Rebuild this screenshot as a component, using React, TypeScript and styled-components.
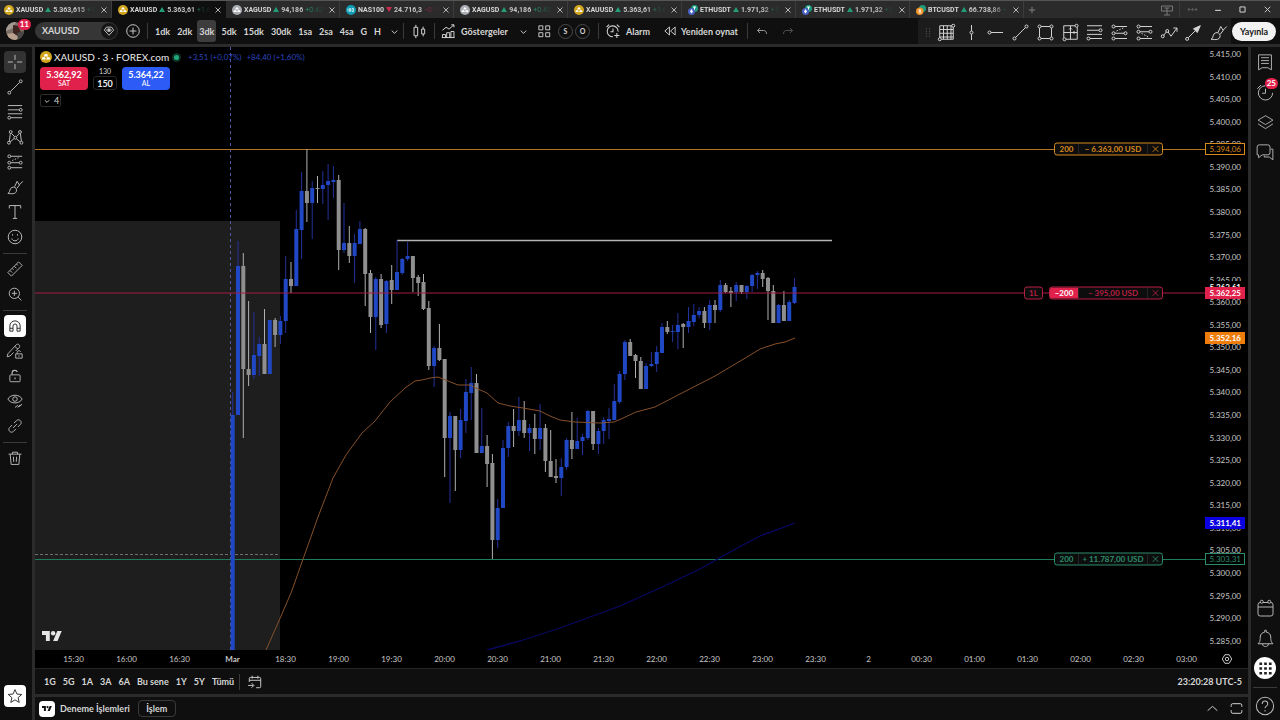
import React from "react";
import styled, { createGlobalStyle, css } from "styled-components";

const GlobalStyle = createGlobalStyle`
  * { box-sizing: border-box; }
  html, body { margin: 0; background: #2b2b2b; }
  body, button, input {
    font-family: "Lato", "Open Sans", "Liberation Sans", sans-serif;
    font-size: 9px;
    color: #d6d6d6;
  }
  button { border: 0; padding: 0; background: none; cursor: pointer; }
`;

/* ---------- page frame ---------- */

const Page = styled.div`
  display: flex;
  flex-direction: column;
  min-height: 100vh;
  background: #2b2b2b;
  overflow: hidden;
`;

const Workspace = styled.div`
  flex: 1;
  display: flex;
  gap: 3px;
  margin-top: 3px;
`;

const Center = styled.main`
  flex: 1;
  min-width: 0;
  display: flex;
  flex-direction: column;
  gap: 3px;
`;

/* ---------- browser tabs ---------- */

const TabStrip = styled.header`
  display: flex;
  height: 18px;
  background: #2b2b2b;
  border-top: 1px solid #565656;
`;

const Tab = styled.div<{ $active?: boolean; $first?: boolean }>`
  display: flex;
  align-items: center;
  gap: 2px;
  width: ${(p) => (p.$first ? 112 : 114)}px;
  padding: 0 2px 0 ${(p) => (p.$first ? 4 : 6)}px;
  background: ${(p) => (p.$active ? "#0f0f0f" : "transparent")};
  border-right: 1px solid ${(p) => (p.$active ? "#0f0f0f" : "#3c3c3c")};
`;

const TabText = styled.div`
  flex: 1;
  min-width: 0;
  display: flex;
  align-items: center;
  gap: 2px;
  white-space: nowrap;
  font-family: "Roboto", "Liberation Sans", sans-serif;
  font-size: 7px;
  font-weight: 700;
  line-height: 12px;
  mask-image: linear-gradient(90deg, #000 76%, transparent 100%);
`;

const TabPrice = styled.span`
  color: #c4c4c4;
`;

const Delta = styled.span<{ $down?: boolean }>`
  color: ${(p) => (p.$down ? "#c92a50" : "#249c78")};
  font-weight: 400;
`;

const CloseTab = styled.button`
  display: flex;
  align-items: center;
  justify-content: center;
  flex: none;
  width: 10px;
  height: 12px;
`;

const NewTab = styled.button`
  display: flex;
  align-items: center;
  justify-content: center;
  width: 16px;
  color: #8a8a8a;
`;

const WindowControls = styled.div`
  display: flex;
  align-items: center;
  margin-left: auto;
`;

const WindowButton = styled.button`
  display: flex;
  align-items: center;
  justify-content: center;
  width: 25px;
  height: 16px;
`;

/* ---------- top toolbar ---------- */

const Toolbar = styled.nav`
  display: flex;
  align-items: center;
  height: 26px;
  background: #0f0f0f;
  padding-left: 6px;
`;

const Avatar = styled.button`
  position: relative;
  display: flex;
  width: 18px;
  height: 18px;
  margin-right: 11px;
`;

const Badge = styled.span<{ $right: number }>`
  position: absolute;
  top: -3px;
  right: ${(p) => -p.$right}px;
  min-width: 13px;
  height: 11px;
  padding: 0 2px;
  border-radius: 6px;
  background: #e0214c;
  color: #fff;
  font-size: 8px;
  line-height: 11px;
  font-weight: 700;
  text-align: center;
`;

const SymbolBox = styled.label`
  display: flex;
  align-items: center;
  width: 83px;
  height: 18px;
  border-radius: 9px;
  background: #363636;
  padding: 0 1px 0 7px;
`;

const SymbolInput = styled.input`
  flex: 1;
  min-width: 0;
  padding: 0;
  border: 0;
  outline: 0;
  background: transparent;
  font-weight: 700;
  line-height: 12px;
`;

const GemButton = styled.button`
  display: flex;
  align-items: center;
  justify-content: center;
  width: 16px;
  height: 16px;
  border-radius: 8px;
  background: #161616;
`;

const Divider = styled.span<{ $before?: number }>`
  width: 1px;
  height: 16px;
  margin-left: ${(p) => p.$before ?? 0}px;
  background: #3a3a3a;
`;

const IconButton = styled.button<{ $w?: number }>`
  display: flex;
  align-items: center;
  justify-content: center;
  flex: none;
  width: ${(p) => p.$w ?? 24}px;
  height: 22px;
`;

const Intervals = styled.div`
  display: flex;
  gap: 3px;
  padding: 0 2px 0 5px;
`;

const Interval = styled.button<{ $active?: boolean }>`
  height: 22px;
  padding: 0 2px;
  border-radius: 3px;
  font-weight: 700;
  background: ${(p) => (p.$active ? "#3d3d3d" : "transparent")};
`;

const TextButton = styled.button<{ $w: number }>`
  display: flex;
  align-items: center;
  width: ${(p) => p.$w}px;
  height: 22px;
  white-space: nowrap;
  font-weight: 700;
`;

const Round = styled.button`
  width: 15px;
  height: 15px;
  margin-left: 2px;
  border: 1px solid #4a4a4a;
  border-radius: 8px;
  font-size: 7px;
  line-height: 12px;
  font-weight: 700;
`;

const Favorites = styled.div`
  display: flex;
  align-items: center;
  width: 313px;
  height: 26px;
  margin-left: auto;
  padding: 2px 0 0 3px;
  background: #1c1c1c;
  border-radius: 4px 0 0 0;
`;

const FavoriteTool = styled.button`
  display: flex;
  align-items: center;
  justify-content: center;
  flex: 1 1 0;
  height: 22px;
`;

const Publish = styled.button`
  width: 44px;
  height: 19px;
  margin: 0 4px 0 1px;
  border-radius: 10px;
  background: #f2f2f2;
  color: #1a1a1a;
  font-weight: 700;
`;

/* ---------- side bars ---------- */

const SideBar = styled.aside<{ $w: number; $right?: boolean }>`
  flex: none;
  display: flex;
  flex-direction: column;
  align-items: center;
  gap: ${(p) => (p.$right ? 8 : 3)}px;
  width: ${(p) => p.$w}px;
  padding: ${(p) => (p.$right ? "4px 1px 3px 0" : "4px 2px 13px 0")};
  background: #0f0f0f;
`;

const SideFoot = styled.div`
  display: flex;
  flex-direction: column;
  align-items: center;
  gap: 6px;
`;

const Tool = styled.button<{ $active?: boolean; $white?: boolean; $round?: boolean }>`
  position: relative;
  display: flex;
  align-items: center;
  justify-content: center;
  flex: none;
  width: 22px;
  height: 22px;
  border-radius: ${(p) => (p.$round ? 11 : 4)}px;
  color: #b8b8b8;
  ${(p) => p.$active && css`background: #333;`}
  ${(p) => p.$white && css`background: #fff; color: #222;`}
`;

const Rule = styled.span`
  width: 24px;
  height: 1px;
  margin: 2px 0 1px;
  background: #3a3a3a;
`;

const Spacer = styled.span`
  flex: 1;
`;

/* ---------- chart ---------- */

const ChartPanel = styled.section`
  flex: 1;
  display: flex;
  flex-direction: column;
  background: #000;
  overflow: hidden;
`;

const PlotRow = styled.div`
  flex: 1;
  display: flex;
  min-height: 603px;
`;

const Plot = styled.div`
  position: relative;
  flex: 1;
  min-width: 0;
`;

const Canvas = styled.svg`
  position: absolute;
  inset: 0;
  width: 100%;
  height: 100%;
`;

const Legend = styled.div`
  position: absolute;
  top: 4px;
  left: 5px;
  display: flex;
  flex-direction: column;
  align-items: flex-start;
  gap: 4px;
`;

const LegendTitle = styled.div`
  display: flex;
  align-items: center;
  gap: 2px;
  height: 12px;
  white-space: nowrap;
`;

const LegendName = styled.h1`
  margin: 0;
  width: 112px;
  font-size: 10px;
  line-height: 12px;
  font-weight: 400;
  color: #ececec;
`;

const StatusDot = styled.span`
  width: 5px;
  height: 5px;
  margin: 0 7px 0 6px;
  border-radius: 3px;
  background: #22a97c;
  box-shadow: 0 0 0 2px #0b3327;
`;

const Change = styled.span`
  margin-right: 3px;
  color: #2c44bc;
  font-size: 8px;
  line-height: 12px;
`;

const TradeRow = styled.div`
  display: flex;
  gap: 5px;
`;

const TradeButton = styled.button<{ $buy?: boolean }>`
  display: flex;
  flex-direction: column;
  align-items: center;
  justify-content: center;
  width: 48px;
  height: 23px;
  border-radius: 4px;
  background: ${(p) => (p.$buy ? "#2d5bf5" : "#e0214c")};
  color: #fff;
  font-size: 7px;
  line-height: 8px;
  b { font-size: 9px; line-height: 9px; }
`;

const Quantity = styled.label`
  display: flex;
  flex-direction: column;
  align-items: center;
  gap: 1px;
  font-size: 7px;
  line-height: 8px;
`;

const QuantityInput = styled.input`
  width: 24px;
  height: 14px;
  padding: 0;
  border: 1px solid #262626;
  border-radius: 3px;
  background: #000;
  color: #eee;
  font-weight: 700;
  text-align: center;
`;

const Collapse = styled.button`
  display: flex;
  align-items: center;
  justify-content: center;
  gap: 2px;
  width: 21px;
  height: 13px;
  border: 1px solid #2c2c2c;
  border-radius: 2px;
`;

const Watermark = styled.div`
  position: absolute;
  left: 7px;
  bottom: 9px;
  display: flex;
`;

const Order = styled.div<{ $color: string }>`
  position: absolute;
  right: 42px;
  display: flex;
  gap: 6px;
  height: 13px;
  transform: translateY(-50%);
  color: ${(p) => p.$color};
  line-height: 11px;
`;

const OrderBox = styled.div`
  display: flex;
  align-items: center;
  overflow: hidden;
  border: 1px solid currentColor;
  border-radius: 3px;
  background: #0d0d0d;
  font-size: 8px;
  font-weight: 700;
`;

const OrderSize = styled.span<{ $fill?: string }>`
  width: ${(p) => (p.$fill ? 28 : 23)}px;
  text-align: center;
  background: ${(p) => p.$fill ?? "transparent"};
  color: ${(p) => (p.$fill ? "#fff" : "inherit")};
`;

const OrderAmount = styled.span`
  width: 70px;
  border: solid #252525;
  border-width: 0 1px;
  text-align: center;
  white-space: nowrap;
`;

const OrderClose = styled.button`
  display: flex;
  align-items: center;
  justify-content: center;
  width: 14px;
  color: inherit;
`;

const OrderKind = styled.span`
  width: 17px;
  text-align: center;
`;

const PriceScale = styled.div`
  position: relative;
  flex: none;
  display: flex;
  flex-direction: column;
  justify-content: space-between;
  width: 43px;
  padding: 0 7px 2px 0;
  color: #c8c8c8;
  font-size: 8px;
  line-height: 14px;
  text-align: right;
`;

const PriceTag = styled.span<{ $bg: string; $color?: string }>`
  position: absolute;
  left: 0;
  width: 40px;
  height: 12px;
  padding-right: 3px;
  transform: translateY(-50%);
  background: ${(p) => p.$bg};
  border: 1px solid ${(p) => p.$color ?? p.$bg};
  color: ${(p) => p.$color ?? "#fff"};
  font-weight: ${(p) => (p.$color ? 400 : 700)};
  line-height: 10px;
`;

const TimeScale = styled.div`
  display: flex;
  align-items: center;
  height: 18px;
  padding-left: 12px;
  font-size: 8px;
  color: #c8c8c8;
`;

const TimeLabel = styled.span<{ $bold?: boolean }>`
  flex: 1;
  text-align: center;
  font-weight: ${(p) => (p.$bold ? 700 : 400)};
`;

const ScaleSettings = styled.button`
  display: flex;
  width: 35px;
  padding-left: 8px;
`;

const RangeBar = styled.div`
  display: flex;
  align-items: center;
  height: 26px;
  padding: 0 6px;
  border-top: 1px solid #242424;
  background: #0f0f0f;
`;

const Ranges = styled.div`
  display: flex;
  gap: 1px;
`;

const RangeButton = styled.button`
  height: 18px;
  padding: 0 3px;
  font-weight: 700;
  white-space: nowrap;
`;

const Clock = styled.button`
  margin-left: auto;
  font-weight: 700;
`;

const BottomPanel = styled.footer`
  display: flex;
  align-items: center;
  height: 23px;
  padding: 0 0 0 4px;
  background: #0f0f0f;
  font-weight: 700;
`;

const LogoTile = styled.span`
  display: flex;
  align-items: center;
  justify-content: center;
  width: 16px;
  height: 16px;
  margin-right: 5px;
  border-radius: 4px;
  background: #fff;
`;

const TradeTab = styled.button`
  width: 38px;
  height: 17px;
  margin-left: 8px;
  border: 1px solid #3a3a3a;
  border-radius: 4px;
  font-weight: 700;
`;

/* ---------- icons ---------- */

const Dot = ({ x, y }: { x: number; y: number }) => <circle cx={x} cy={y} r="2" />;

const shapes: Record<string, React.ReactNode> = {
  cross: <path d="M14 4v7M14 17v7M4 14h7M17 14h7" />,
  line: <><path d="M7.6 20.4 20.4 7.6" /><Dot x={6} y={22} /><Dot x={22} y={6} /></>,
  fib: <><path d="M4 5h20M4 11h16M4 16.5h20M8 22h16" /><Dot x={22} y={11} /><Dot x={6} y={22} /></>,
  pattern: <><path d="M6 20 7.500 9M9 9l4.500 4.500M16 13.500 20 9M7 21l6-5M16 16.500l5.500 4.500M21.500 9 23 20" /><Dot x={8} y={7} /><Dot x={14.5} y={15} /><Dot x={21} y={7} /><Dot x={5.5} y={22} /><Dot x={23} y={22} /></>,
  position: <><path d="M8 6h16M8 15h12M8 22h16" /><path d="m10 12 9-4" strokeDasharray="2 2" /><Dot x={6} y={6} /><Dot x={6} y={15} /><Dot x={22} y={15} /><Dot x={6} y={22} /></>,
  short: <><path d="M8 6h16M8 13h12M8 22h16" /><path d="m10 15 9 5" strokeDasharray="2 2" /><Dot x={6} y={6} /><Dot x={6} y={13} /><Dot x={22} y={13} /><Dot x={6} y={22} /></>,
  brush: <path d="M4 23c3-1 2-4 4-7 2-2.5 6-2.5 7.500 0s.5 6-2.500 7c-3 .8-6 .3-9 0zM13.500 13.500 17 6l3 5 5-5M16.500 16l4-5" />,
  text: <path d="M6 9V5h16v4M14 5v18M11 23h6" />,
  smile: <><circle cx="14" cy="14" r="9.5" /><path d="M9.5 16c1 4.5 8 4.5 9 0M10.5 10v2M17.5 10v2" /></>,
  ruler: <path d="M4 19 19 4l5 5L9 24zM7 16l3 3M10 13l2 2M13 10l3 3M16 7l2 2" />,
  zoom: <><circle cx="13" cy="13" r="8" /><path d="m19 19 5 5M13 9v8M9 13h8" /></>,
  magnet: <path d="M5 23v-9a9 9 0 0 1 18 0v9h-5.5v-9a3.5 3.5 0 0 0-7 0v9zM5 18h5.5M17.5 18H23" />,
  pencilLock: <><path d="M4 18 16 5c2-2 6 1 4 4l-5 5M4 18l-1 4 4-1 5-5M14 8l4 3" /><path d="M15 18h9v6h-9zM17 18v-2c0-3 4.5-3 5-1" /><path d="M19.5 20v2" /></>,
  lock: <><rect x="5" y="12" width="18" height="12" rx="1.5" /><path d="M9 12V8c0-5 8-5 9-1M14 16.5v3" strokeWidth="2" /></>,
  eye: <><path d="M3 11c4-8 18-8 22 0-4 8-18 8-22 0z" /><circle cx="14" cy="11" r="3.5" /><path d="m14 24 4-3 2 2 5-4M18 24l4-4" /></>,
  link: <path d="m11 17 6-6M12.5 9.5l4-4c4-3.500 9.500 2 6 6l-4 4M9.500 12.500l-4 4c-3.500 4 2 9.500 6 6l4-4" />,
  trash: <path d="M4 8h20M10 8V5h8v3M6.5 8 8 24h12l1.500-16M11.500 12l.5 8M16.500 12l-.5 8" />,
  star: <path d="m14 4 3 7 7.500.6-5.700 5 1.800 7.400-6.600-4-6.600 4 1.800-7.400-5.700-5L11 11z" />,
  grid: <><path d="M5 5h16M5 10h18M5 15h18M5 20h18M5 5v16M10 5v18M15 5v18M20 5v18M23 7v16H7" /><Dot x={23} y={5} /><Dot x={5} y={23} /></>,
  vline: <><path d="M14 4v8M14 16v8" /><Dot x={14} y={14} /></>,
  hline: <><path d="M8 14h16" /><Dot x={6} y={14} /></>,
  rect: <><path d="M8 6h12M8 22h12M6 8v12M22 8v12" /><Dot x={6} y={6} /><Dot x={22} y={6} /><Dot x={6} y={22} /><Dot x={22} y={22} /></>,
  range: <><path d="M5 5h15M5 5v16M23 7v16H8M14 5v18M5 14h18M12 10l2-2 2 2M18 12l2 2-2 2" /><Dot x={22} y={5} /><Dot x={6} y={23} /></>,
  zigzag: <><path d="m6 18 4-5M12 13l4 6M16 19l8-11M19 8h5v5" /><Dot x={5} y={19} /><Dot x={11} y={12} /></>,
  arrow: <><path d="M7 21 17 11M21 7l2-2" /><path d="m14 9 9-4-4 9z" fill="currentColor" /><Dot x={5.5} y={22.5} /></>,
  candles: <path d="M8 3v4M8 21v4M5 7h6v14H5zM20 6v4M20 18v4M17.500 10h5v8h-5z" />,
  indicators: <path d="M4 24v-5h5v5M11 24v-8h5v8M18 24V14h5v10M3 24h21M4 12l6-5 5 3 8-7M18.500 3H23v4" />,
  layouts: <path d="M5 5h7v7H5zM17 5h7v7h-7zM5 17h7v7H5zM17 17h7v7h-7z" />,
  alarm: <path d="M22 15a8.5 8.5 0 1 0-8 8M14 10v5h-4M4 8l4-4M20 4l4 4M20 17v8M16 21h8" />,
  replay: <path d="M13 7v14L5 14zM23 7v14l-8-7z" />,
  undo: <path d="m10 8-5 5 5 5M5 13h12c4 0 6 2.5 6 7" />,
  redo: <path d="m18 8 5 5-5 5M23 13H11c-4 0-6 2.5-6 7" />,
  chevron: <path d="m8 12 6 6 6-6" />,
  chevronUp: <path d="m5 18 9-8 9 8" />,
  close: <path d="m7 7 14 14M21 7 7 21" />,
  plus: <path d="M14 5v18M5 14h18" />,
  plusCircle: <><circle cx="14" cy="14" r="11" /><path d="M14 8v12M8 14h12" /></>,
  minimize: <path d="M6 15h16" strokeWidth="3" />,
  maximize: <path d="M6 6h16v16H6z" strokeWidth="3" />,
  screen: <path d="M3 6h22v10H3zM14 10v14M8 24h12M9 10h10" />,
  dots: <><Dot x={5} y={14} /><Dot x={14} y={14} /><Dot x={23} y={14} /></>,
  gem: <><path d="M8 5h12l5 7-11 12L3 12z" /><path d="M8 12c3-4 9-4 12 0-3 4-9 4-12 0z" /><circle cx="14" cy="12" r="2" fill="currentColor" /></>,
  watchlist: <path d="M5 4h18v21l-5-3h-8l-5 3zM8.5 8h11M8.5 12h11M8.5 16h11" />,
  clock: <path d="M14 5a9.5 9.5 0 1 0 9.5 9.5M14 9v6H9.5M3 9l5-5" />,
  layers: <path d="m14 4 11 6.5L14 17 3 10.500zM3 16l11 7 11-7" />,
  chat: <path d="M6 4h12a3 3 0 0 1 3 3v8a3 3 0 0 1-3 3h-8l-5 4V18H3V7a3 3 0 0 1 3-3zM22 10h3v15l-5-4h-7v-2" />,
  calendar: <><rect x="4" y="6" width="20" height="18" rx="3" /><path d="M4 12h20M11 6h6" /><circle cx="9" cy="5" r="2" fill="#0f0f0f" /><circle cx="19" cy="5" r="2" fill="#0f0f0f" /></>,
  bell: <path d="M4 21c2-2 3-3 3-9 0-4 3-6 6-6.500V3h2v2.500c3 .5 6 2.500 6 6.500 0 6 1 7 3 9zM10 21c0 5 8 5 8 0" />,
  apps: <path fill="currentColor" stroke="none" d="M5 5h4v4H5zM12 5h4v4h-4zM19 5h4v4h-4zM5 12h4v4H5zM12 12h4v4h-4zM19 12h4v4h-4zM5 19h4v4H5zM12 19h4v4h-4zM19 19h4v4h-4z" />,
  help: <><circle cx="14" cy="14" r="11" /><path d="M10.5 11.500c0-5 7-5 7 0 0 3-3.500 2.500-3.500 5.500M14 19v2" /></>,
  gear: <><path d="M9 4h10l6 10-6 10H9L3 14z" /><circle cx="14" cy="14" r="4" /></>,
  goTo: <path d="M4 14V8a2 2 0 0 1 2-2h16a2 2 0 0 1 2 2v14a2 2 0 0 1-2 2h-6M4 11h20M9 3v5M19 3v5M2 20h9M8 16l4 4-4 4" />,
  expand: <path d="M4 11V8a3 3 0 0 1 3-3h14a3 3 0 0 1 3 3v3M24 17v3a3 3 0 0 1-3 3H7a3 3 0 0 1-3-3v-3" />,
  grip: <path fill="currentColor" stroke="none" d="M8 3h3v3H8zM17 3h3v3h-3zM8 10h3v3H8zM17 10h3v3h-3zM8 17h3v3H8zM17 17h3v3h-3zM8 24h3v3H8zM17 24h3v3h-3z" />,
};

interface IconProps { name: string; size?: number; weight?: number; color?: string }

function Icon({ name, size = 21, weight = 1.3, color = "currentColor" }: IconProps) {
  return (
    <svg width={size} height={size} viewBox="0 0 28 28" fill="none" stroke={color} color={color} strokeWidth={weight} strokeLinejoin="round" aria-hidden="true">
      {shapes[name]}
    </svg>
  );
}

function Logo({ width, color }: { width: number; color: string }) {
  return (
    <svg width={width} height={Math.round(width / 2)} viewBox="0 4 36 18" fill={color} aria-hidden="true">
      <path d="M14 22H7V11H0V4h14v18zM28 22h-8l7.500-18h8L28 22z" />
      <circle cx="20" cy="8" r="4" />
    </svg>
  );
}

const CoinSvg = styled.svg`
  flex: none;
`;

function Coin({ kind, size = 10 }: { kind: string; size?: number }) {
  return (
    <CoinSvg width={size} height={size} viewBox="0 0 20 20" aria-hidden="true">
      {(kind === "gold" || kind === "silver") && (
        <>
          <circle cx="10" cy="10" r="10" fill={kind === "gold" ? "#d1a51c" : "#a9adb3"} />
          <path fill="#fff" d="M8 5h4l1.500 4h-7zM4 10.500h4.500L9.500 14H3zM11.500 10.500H16l1 3.500h-6.500z" />
        </>
      )}
      {kind === "index" && (
        <>
          <circle cx="10" cy="10" r="10" fill="#0e9db5" />
          <path d="M4 7v6M7 7v6h2V7zM12 7v6h3V7z" stroke="#fff" strokeWidth="1.3" fill="none" />
        </>
      )}
      {kind === "eth" && (
        <>
          <circle cx="13" cy="7" r="7" fill="#1c9c7c" />
          <path d="M10 4h6M13 4v6" stroke="#fff" strokeWidth="2" />
          <circle cx="7" cy="13" r="7" fill="#4a62c4" />
          <path d="m7 8 3 5-3 4-3-4z" fill="#fff" />
        </>
      )}
      {kind === "btc" && (
        <>
          <circle cx="13" cy="7" r="7" fill="#1c9c7c" />
          <circle cx="7.5" cy="12.5" r="7.5" fill="#ee9226" />
          <path d="M6 9h3v3H6zM6 12h4v4H6z" stroke="#fff" strokeWidth="1.2" fill="none" />
        </>
      )}
    </CoinSvg>
  );
}

/* ---------- data ---------- */

const tabs = [
  ["gold", "XAUUSD", "5.363,615", "+1.6%"],
  ["gold", "XAUUSD", "5.363,61", "+1.6%"],
  ["silver", "XAGUSD", "94,186", "+0.42%"],
  ["index", "NAS100", "24.716,3", "−0.78%"],
  ["silver", "XAGUSD", "94,186", "+0.42%"],
  ["gold", "XAUUSD", "5.363,61", "+1.6%"],
  ["eth", "ETHUSDT", "1.971,32", "+1.6%"],
  ["eth", "ETHUSDT", "1.971,32", "+1.6%"],
  ["btc", "BTCUSDT", "66.738,86", "+1.4%"],
];

const intervals = ["1dk", "2dk", "3dk", "5dk", "15dk", "30dk", "1sa", "2sa", "4sa", "G", "H"];
const favorites = ["grid", "vline", "hline", "line", "rect", "range", "fib", "position", "short", "zigzag", "arrow", "brush"];
const drawingTools = ["cross", "line", "fib", "pattern", "position", "brush", "text", "smile"];
const ranges = ["1G", "5G", "1A", "3A", "6A", "Bu sene", "1Y", "5Y", "Tümü"];
const times = ["15:30", "16:00", "16:30", "Mar", "18:30", "19:00", "19:30", "20:00", "20:30", "21:00", "21:30", "22:00", "22:30", "23:00", "23:30", "2", "00:30", "01:00", "01:30", "02:00", "02:30", "03:00"];
const prices = Array.from({ length: 27 }, (_, i) => `5.${415 - i * 5},00`);

const PLOT_W = 1170;
const PLOT_H = 603;
const ORIGIN_X = 35;
const ORIGIN_Y = 47;

const priceTop = (price: number) => `${((102 + (5394.06 - price) * 4.52) / PLOT_H) * 100}%`;

/* direction, wick top, body top, body bottom, wick bottom */
type Candle = [string, number, number, number, number];
const candles: Candle[] = [
  ["u", 392, 415, 660, 660], ["u", 241, 266, 415, 415], ["d", 253, 266, 369, 438], ["d", 301, 369, 375, 386],
  ["u", 312, 355, 375, 379], ["u", 337, 344, 356, 376], ["d", 309, 344, 374, 374], ["u", 320, 320, 374, 374],
  ["d", 318, 320, 335, 347], ["u", 316, 321, 335, 344], ["u", 256, 279, 321, 333], ["d", 262, 279, 286, 293],
  ["u", 210, 229, 286, 286], ["u", 172, 191, 230, 259], ["d", 149, 191, 203, 222], ["u", 181, 188, 203, 239],
  ["d", 176, 188, 189, 203], ["u", 171, 185, 189, 204], ["u", 164, 181, 185, 220], ["u", 166, 180, 182, 198],
  ["d", 175, 180, 250, 270], ["u", 203, 243, 250, 253], ["d", 226, 243, 256, 263], ["u", 234, 243, 256, 283],
  ["u", 221, 229, 244, 244], ["d", 228, 229, 274, 306], ["d", 270, 273, 317, 333], ["u", 277, 279, 317, 350],
  ["d", 274, 279, 325, 328], ["u", 280, 281, 324, 333], ["d", 265, 280, 290, 304], ["u", 240, 272, 290, 290],
  ["u", 258, 259, 273, 275], ["u", 242, 256, 259, 261], ["d", 256, 256, 278, 292], ["d", 275, 277, 283, 296],
  ["d", 274, 282, 309, 310], ["d", 301, 308, 366, 370], ["u", 346, 348, 366, 387], ["d", 324, 348, 360, 361],
  ["d", 359, 359, 438, 477], ["u", 412, 416, 438, 503], ["d", 416, 416, 450, 491], ["u", 409, 420, 450, 458],
  ["u", 379, 392, 421, 433], ["u", 367, 383, 393, 420], ["d", 374, 383, 453, 453], ["u", 408, 446, 453, 453],
  ["d", 435, 446, 464, 487], ["d", 454, 463, 540, 559], ["u", 499, 508, 540, 548], ["u", 440, 448, 508, 508],
  ["u", 422, 426, 448, 457], ["d", 409, 426, 431, 447], ["u", 397, 420, 431, 436], ["d", 401, 420, 433, 438],
  ["u", 424, 428, 433, 451], ["d", 414, 428, 439, 454], ["u", 404, 428, 439, 450], ["d", 424, 428, 461, 472],
  ["d", 430, 461, 477, 477], ["d", 459, 476, 478, 483], ["u", 458, 467, 478, 496], ["u", 438, 440, 467, 470],
  ["d", 412, 440, 449, 459], ["u", 418, 441, 449, 449], ["u", 434, 437, 441, 455], ["u", 410, 411, 438, 440],
  ["d", 411, 411, 444, 450], ["u", 428, 431, 444, 454], ["u", 417, 420, 431, 444], ["u", 408, 419, 421, 439],
  ["u", 384, 401, 420, 420], ["u", 371, 374, 402, 404], ["u", 340, 342, 374, 380], ["d", 339, 342, 356, 356],
  ["d", 354, 355, 361, 378], ["d", 357, 361, 389, 389], ["u", 363, 366, 389, 389], ["u", 352, 364, 366, 367],
  ["u", 346, 352, 364, 372], ["u", 323, 327, 353, 353], ["d", 321, 327, 332, 334], ["u", 325, 331, 332, 342],
  ["u", 313, 325, 332, 349], ["d", 323, 324, 327, 348], ["u", 307, 321, 327, 333], ["u", 304, 315, 322, 326],
  ["u", 307, 311, 315, 318], ["d", 307, 311, 323, 328], ["u", 300, 305, 323, 330], ["d", 300, 305, 310, 323],
  ["u", 280, 285, 310, 312], ["d", 283, 285, 292, 293], ["d", 287, 291, 293, 307], ["u", 282, 285, 292, 301],
  ["d", 285, 285, 292, 294], ["u", 285, 286, 292, 299], ["u", 274, 275, 286, 292], ["u", 271, 273, 275, 289],
  ["d", 270, 273, 279, 287], ["d", 277, 278, 291, 320], ["d", 285, 291, 323, 323], ["u", 304, 305, 323, 323],
  ["d", 291, 305, 321, 321], ["u", 300, 302, 321, 321], ["u", 278, 287, 303, 304],
];

const fastAverage = "266,650 278,623 291,593 302,562 318,517 333,478 346,455 362,433 375,421 390,402 405,388 415,381 422,380 430,378 438,377 448,381 458,385 470,385 478,389 487,393 498,403 510,406 523,408 540,411 550,416 560,420 575,422 600,423 614,422 621,419 636,412 655,407 680,394 715,376 747,357 760,349 775,344 785,342 795,338";
const slowAverage = "487,650 520,641 560,628 620,606 660,588 700,569 730,552 760,536 795,523";

function ChartCanvas() {
  return (
    <Canvas viewBox={`${ORIGIN_X} ${ORIGIN_Y} ${PLOT_W} ${PLOT_H}`} preserveAspectRatio="none" role="img" aria-label="XAUUSD">
      <rect x="35" y="221" width="245" height="429" fill="#1e1e1e" />
      <path d="M35 554.5H280" stroke="#6e6e6e" strokeDasharray="3 2" />
      <path d="M230.5 47V650" stroke="#5258a0" strokeDasharray="3 3" />
      <rect x="35" y="149" width="1170" height="1" fill="#b0762a" />
      <rect x="35" y="559" width="1170" height="1" fill="#1f7a5e" />
      <path d="M397 240.5H832" stroke="#b4b4b4" strokeWidth="1.5" />
      <polyline points={slowAverage} fill="none" stroke="#080862" strokeWidth="1.3" />
      {candles.map(([dir, high, top, bottom, low], i) => {
        const x = 232.7 + i * 5.3;
        const up = dir === "u";
        return (
          <g key={i}>
            <rect x={x - 0.5} y={high} width="1" height={low - high} fill={up ? "#23319a" : "#b0b0b0"} />
            <rect x={x - 2} y={top} width="4" height={Math.max(1, bottom - top)} fill={up ? "#2148c4" : "#8f8f8f"} />
          </g>
        );
      })}
      <polyline points={fastAverage} fill="none" stroke="#86502a" />
      <path d="M35 293H1205" stroke="#a31c40" />
    </Canvas>
  );
}

interface OrderProps { price: number; size: string; amount: string; color: string; kind?: string }

function OrderLabel({ price, size, amount, color, kind }: OrderProps) {
  return (
    <Order $color={color} style={{ top: priceTop(price) }}>
      {kind && <OrderBox><OrderKind>{kind}</OrderKind></OrderBox>}
      <OrderBox>
        <OrderSize $fill={kind ? "#e0214c" : undefined}>{size}</OrderSize>
        <OrderAmount>{amount}</OrderAmount>
        <OrderClose aria-label="Kapat"><Icon name="close" size={11} weight={2.2} /></OrderClose>
      </OrderBox>
    </Order>
  );
}

export default function App() {
  return (
    <Page>
      <GlobalStyle />
      <TabStrip>
        {tabs.map(([kind, name, price, delta], i) => {
          const down = delta.startsWith("−");
          return (
            <Tab key={i} $first={i === 0} $active={i === 1}>
              <Coin kind={kind} size={10} />
              <TabText>
                <span>{name}</span>
                <CoinSvg width="6" height="5" viewBox="0 0 6 5" aria-hidden="true">
                  <path d={down ? "M0 0h6L3 5z" : "M3 0l3 5H0z"} fill={down ? "#c92a50" : "#249c78"} />
                </CoinSvg>
                <TabPrice>{price}</TabPrice>
                <Delta $down={down}>{delta}</Delta>
              </TabText>
              <CloseTab aria-label="Sekmeyi kapat"><Icon name="close" size={10} weight={2.3} /></CloseTab>
            </Tab>
          );
        })}
        <NewTab aria-label="Yeni sekme"><Icon name="plus" size={10} weight={2.5} /></NewTab>
        <WindowControls>
          <WindowButton aria-label="Ekran"><Icon name="screen" size={14} weight={1.6} color="#8a8a8a" /></WindowButton>
          <Divider />
          <WindowButton aria-label="Diğer"><Icon name="dots" size={11} weight={1.6} color="#8a8a8a" /></WindowButton>
          <WindowButton aria-label="Küçült"><Icon name="minimize" size={10} /></WindowButton>
          <WindowButton aria-label="Büyüt"><Icon name="maximize" size={9} /></WindowButton>
          <WindowButton aria-label="Kapat"><Icon name="close" size={11} weight={2.3} /></WindowButton>
        </WindowControls>
      </TabStrip>

      <Toolbar>
        <Avatar aria-label="Profil">
          <svg width="18" height="18" viewBox="0 0 18 18" aria-hidden="true">
            <clipPath id="avatar"><circle cx="9" cy="9" r="9" /></clipPath>
            <g clipPath="url(#avatar)">
              <rect width="18" height="18" fill="#7d6e66" />
              <path d="M0 0h10l-3 6-7 3z" fill="#a39a92" />
              <path d="M7 3l5 1 3 6-3 4-5-2z" fill="#3d2520" />
              <path d="M1 12l6-1 6 4-3 3H3z" fill="#b9a08f" />
              <path d="M11 11l7-2v9h-6z" fill="#4b4744" />
            </g>
          </svg>
          <Badge $right={7}>11</Badge>
        </Avatar>
        <SymbolBox>
          <SymbolInput defaultValue="XAUUSD" aria-label="Sembol" />
          <GemButton aria-label="Özellikler"><Icon name="gem" size={12} weight={2} /></GemButton>
        </SymbolBox>
        <IconButton $w={29} aria-label="Karşılaştır"><Icon name="plusCircle" size={16} weight={1.6} /></IconButton>
        <Divider />
        <Intervals>
          {intervals.map((t) => <Interval key={t} $active={t === "3dk"}>{t}</Interval>)}
        </Intervals>
        <IconButton $w={18} aria-label="Zaman aralığı"><Icon name="chevron" size={13} weight={2} /></IconButton>
        <Divider />
        <IconButton $w={30} aria-label="Mumlar"><Icon name="candles" size={17} weight={1.6} /></IconButton>
        <Divider />
        <IconButton $w={26} aria-label="Gösterge simgesi"><Icon name="indicators" size={17} weight={1.6} /></IconButton>
        <TextButton $w={53}>Göstergeler</TextButton>
        <IconButton $w={18} aria-label="Gösterge şablonları"><Icon name="chevron" size={13} weight={2} /></IconButton>
        <IconButton $w={24} aria-label="Düzenler"><Icon name="layouts" size={16} weight={1.6} /></IconButton>
        <Round>S</Round>
        <Round>O</Round>
        <Divider $before={8} />
        <IconButton $w={27} aria-label="Alarm ekle"><Icon name="alarm" size={18} weight={1.6} /></IconButton>
        <TextButton $w={33}>Alarm</TextButton>
        <IconButton $w={22} aria-label="Geri sar"><Icon name="replay" size={16} weight={1.6} /></IconButton>
        <TextButton $w={66}>Yeniden oynat</TextButton>
        <Divider />
        <IconButton $w={28} aria-label="Geri al"><Icon name="undo" size={14} weight={1.8} color="#a8a8a8" /></IconButton>
        <IconButton $w={24} aria-label="Yinele"><Icon name="redo" size={14} weight={1.8} color="#5a5a5a" /></IconButton>
        <Favorites>
          <IconButton $w={13} aria-label="Taşı"><Icon name="grip" size={10} color="#4c4c4c" /></IconButton>
          {favorites.map((f) => (
            <FavoriteTool key={f} aria-label={f}><Icon name={f} size={21} /></FavoriteTool>
          ))}
        </Favorites>
        <Publish>Yayınla</Publish>
      </Toolbar>

      <Workspace>
        <SideBar $w={32}>
          {drawingTools.map((t) => (
            <Tool key={t} $active={t === "cross"} aria-label={t}><Icon name={t} size={20} weight={1.4} /></Tool>
          ))}
          <Rule />
          <Tool aria-label="Ölç"><Icon name="ruler" size={20} /></Tool>
          <Tool aria-label="Yakınlaştır"><Icon name="zoom" size={18} weight={1.5} /></Tool>
          <Rule />
          <Tool $white aria-label="Mıknatıs"><Icon name="magnet" size={16} weight={1.6} /></Tool>
          <Tool aria-label="Çizim modu"><Icon name="pencilLock" size={20} /></Tool>
          <Tool aria-label="Kilitle"><Icon name="lock" size={16} weight={1.6} /></Tool>
          <Tool aria-label="Gizle"><Icon name="eye" size={18} weight={1.5} /></Tool>
          <Tool aria-label="Bağlantı"><Icon name="link" size={18} weight={1.5} /></Tool>
          <Rule />
          <Tool aria-label="Sil"><Icon name="trash" size={18} weight={1.5} /></Tool>
          <Spacer />
          <Tool $white aria-label="Favoriler"><Icon name="star" size={18} weight={1.4} /></Tool>
        </SideBar>

        <Center>
          <ChartPanel>
            <PlotRow>
              <Plot>
                <ChartCanvas />
                <Legend>
                  <LegendTitle>
                    <Coin kind="gold" size={12} />
                    <LegendName>XAUUSD · 3 · FOREX.com</LegendName>
                    <StatusDot />
                    <Change>+3,51 (+0,07%)</Change>
                    <Change>+84,40 (+1,60%)</Change>
                  </LegendTitle>
                  <TradeRow>
                    <TradeButton><b>5.362,92</b>SAT</TradeButton>
                    <Quantity>130<QuantityInput defaultValue="150" /></Quantity>
                    <TradeButton $buy><b>5.364,22</b>AL</TradeButton>
                  </TradeRow>
                  <Collapse><Icon name="chevron" size={10} weight={2.6} />4</Collapse>
                </Legend>
                <OrderLabel price={5394.06} size="200" amount="− 6.363,00 USD" color="#d98a1e" />
                <OrderLabel price={5362.25} size="−200" amount="− 395,00 USD" color="#b81f45" kind="1L" />
                <OrderLabel price={5303.31} size="200" amount="+ 11.787,00 USD" color="#2b8c6c" />
                <Watermark><Logo width={20} color="#e6e6e6" /></Watermark>
              </Plot>
              <PriceScale>
                {prices.map((p) => <span key={p}>{p}</span>)}
                <PriceTag $bg="#000" $color="#d98a1e" style={{ top: priceTop(5394.06) }}>5.394,06</PriceTag>
                <PriceTag $bg="#000" style={{ top: priceTop(5363.61) }}>5.363,61</PriceTag>
                <PriceTag $bg="#e0214c" style={{ top: priceTop(5362.25) }}>5.362,25</PriceTag>
                <PriceTag $bg="#ee7d0c" style={{ top: priceTop(5352.16) }}>5.352,16</PriceTag>
                <PriceTag $bg="#0a00e0" style={{ top: priceTop(5311.41) }}>5.311,41</PriceTag>
                <PriceTag $bg="#000" $color="#2b8c6c" style={{ top: priceTop(5303.31) }}>5.303,31</PriceTag>
              </PriceScale>
            </PlotRow>
            <TimeScale>
              {times.map((t) => <TimeLabel key={t} $bold={t === "Mar"}>{t}</TimeLabel>)}
              <ScaleSettings aria-label="Ölçek ayarları"><Icon name="gear" size={12} weight={2.2} /></ScaleSettings>
            </TimeScale>
            <RangeBar>
              <Ranges>
                {ranges.map((r) => <RangeButton key={r}>{r}</RangeButton>)}
              </Ranges>
              <Divider $before={2} />
              <IconButton $w={30} aria-label="Tarihe git"><Icon name="goTo" size={16} weight={1.6} /></IconButton>
              <Clock>23:20:28 UTC-5</Clock>
            </RangeBar>
          </ChartPanel>
          <BottomPanel>
            <LogoTile><Logo width={10} color="#111" /></LogoTile>
            Deneme İşlemleri
            <TradeTab>İşlem</TradeTab>
            <Spacer />
            <IconButton $w={24} aria-label="Paneli aç"><Icon name="chevronUp" size={15} weight={1.8} /></IconButton>
            <IconButton $w={24} aria-label="Büyüt"><Icon name="expand" size={15} weight={1.8} /></IconButton>
          </BottomPanel>
        </Center>

        <SideBar $w={29} $right>
          <Tool aria-label="İzleme listesi"><Icon name="watchlist" size={20} /></Tool>
          <Tool aria-label="Alarmlar"><Icon name="clock" size={21} /><Badge $right={2}>25</Badge></Tool>
          <Tool aria-label="Nesne ağacı"><Icon name="layers" size={19} /></Tool>
          <Tool aria-label="Sohbet"><Icon name="chat" size={20} /></Tool>
          <Spacer />
          <Tool aria-label="Takvim"><Icon name="calendar" size={21} /></Tool>
          <Tool aria-label="Bildirimler"><Icon name="bell" size={21} /></Tool>
          <SideFoot>
            <Tool $white $round aria-label="Uygulamalar"><Icon name="apps" size={19} /></Tool>
            <Rule />
            <Tool aria-label="Yardım"><Icon name="help" size={22} /></Tool>
          </SideFoot>
        </SideBar>
      </Workspace>
    </Page>
  );
}
